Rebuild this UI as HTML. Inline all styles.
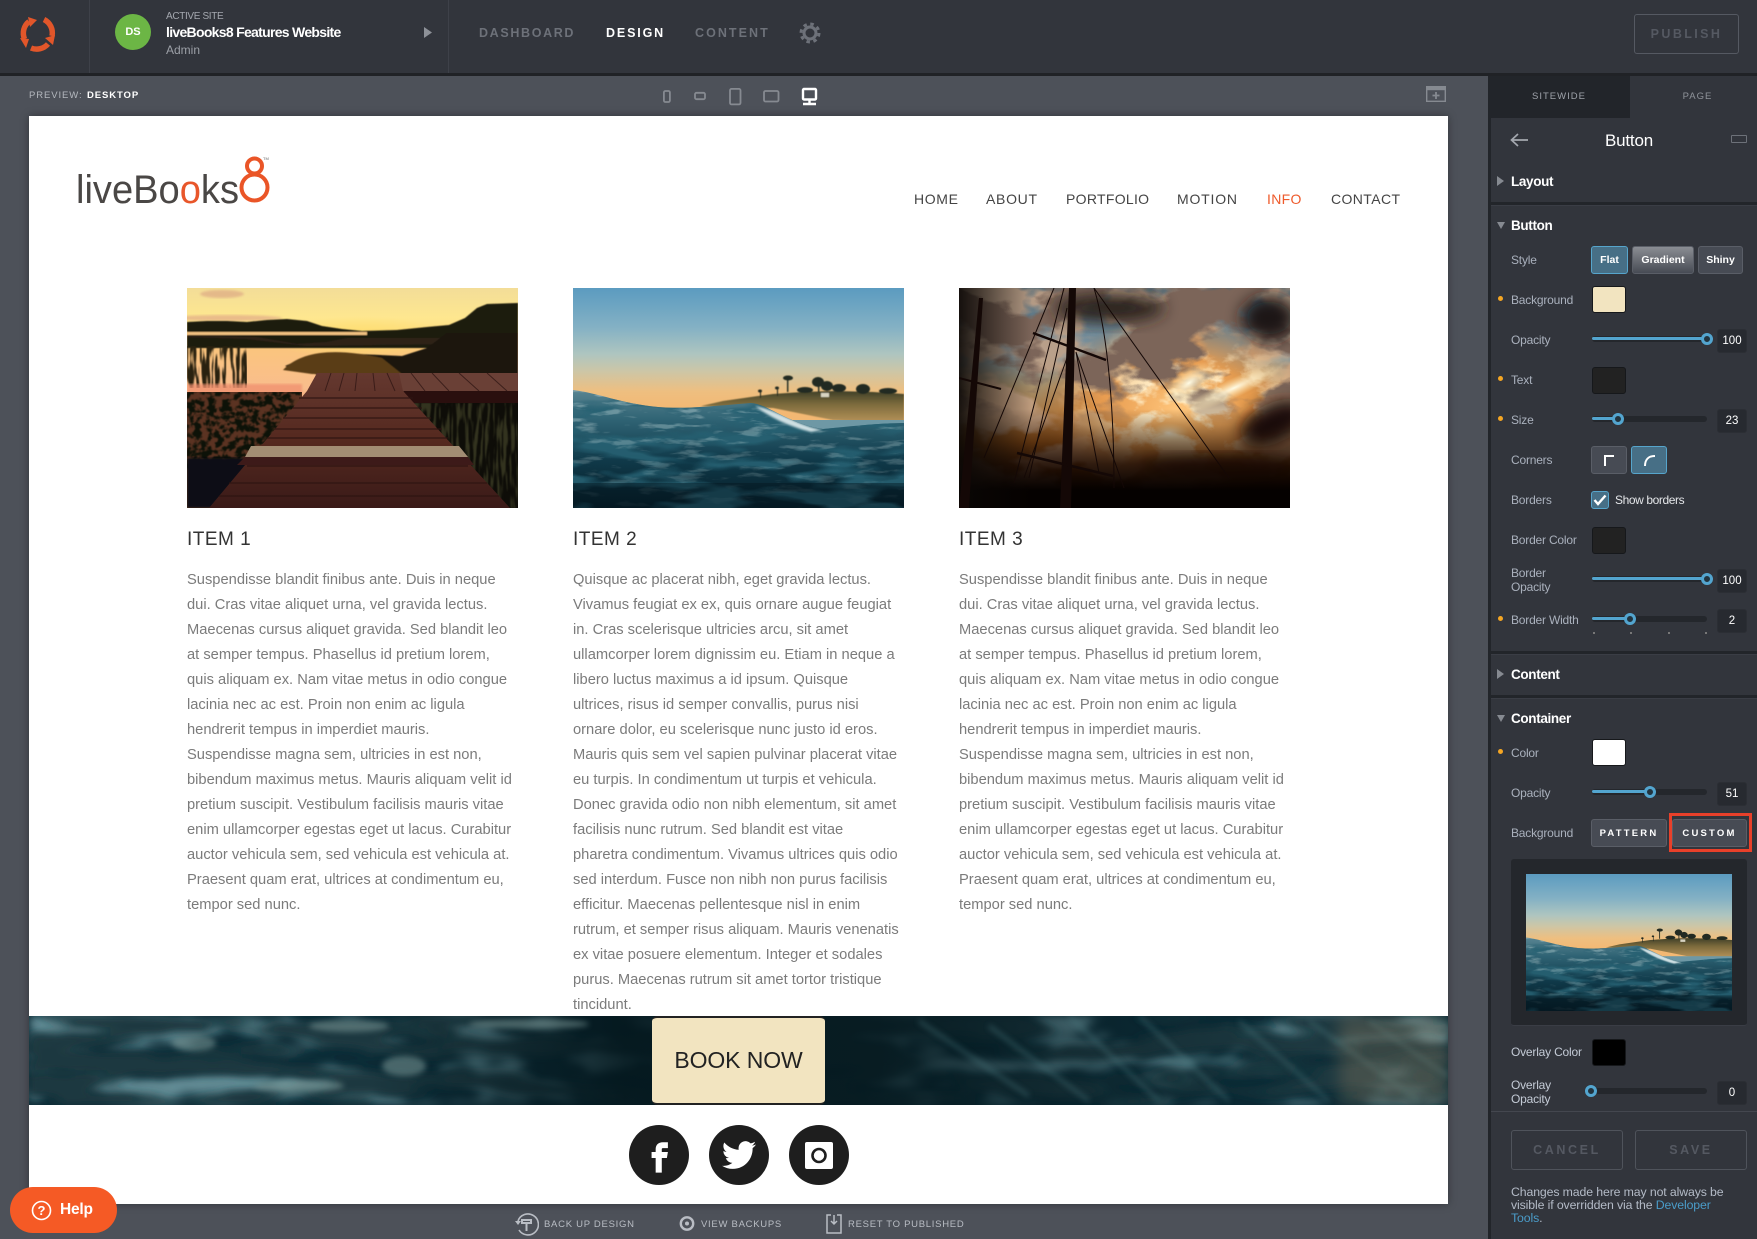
<!DOCTYPE html>
<html><head><meta charset="utf-8"><title>liveBooks8</title>
<style>
*{box-sizing:border-box}
html,body{margin:0;padding:0;width:1757px;height:1239px;overflow:hidden;background:#4d5159}
body{position:relative;font-family:"Liberation Sans",sans-serif}
.a,.l,.h,.dot,.sw,.btn,.tr,.fill,.th,.inp,.t,.body,.div{position:absolute}
.a{white-space:nowrap}
.l{left:1511px;font-size:12px;color:#aab1bd;line-height:14px;white-space:nowrap;letter-spacing:-.2px}
.h{left:1511px;font-size:13.5px;font-weight:bold;color:#fff;line-height:16px;letter-spacing:-.35px}
.dot{left:1498px;width:5px;height:5px;border-radius:50%;background:#f5a623}
.sw{left:1592px;width:34px;height:27px;border-radius:3px;border:1px solid #16181b}
.btn{border:1px solid #5a5e67;border-radius:3px;background:#474b54;color:#fff;font-weight:bold;font-size:10.5px;text-align:center;white-space:nowrap}
.on{background:#476f86;border-color:#56a5cc}
.tr{left:1592px;width:115px;height:6px;border-radius:3px;background:#24272c}
.fill{left:1592px;height:3px;background:#53a5cf;border-radius:2px}
.th{width:12px;height:12px;border-radius:50%;background:#22343f;border:3px solid #53a5cf}
.inp{left:1717px;width:30px;height:24px;background:#272a30;border:1px solid #2b2e34;border-radius:3px;color:#fff;font-size:11.5px;line-height:23px;text-align:center}
.body{font-size:14.7px;line-height:25px;color:#7b7b7b;white-space:nowrap;top:567.5px}
.t{font-size:19px;color:#333;top:528px;line-height:24px;letter-spacing:.5px;white-space:nowrap}
.nav{top:191px;font-size:14px;line-height:16px;color:#444}
.div{left:1491px;width:266px;background:#22252a;border-bottom:1px solid #3a3d45;height:4px}
.bb{top:1219px;font-size:9.5px;line-height:12px;letter-spacing:.72px;color:#b9bdc4}
</style></head><body>

<!-- SVG defs -->
<svg width="0" height="0" style="position:absolute">
<defs>
<linearGradient id="wsky" x1="0" y1="0" x2="0" y2="1"><stop offset="0" stop-color="#5b9bc0"/><stop offset=".18" stop-color="#84b1c4"/><stop offset=".3" stop-color="#aec5c0"/><stop offset=".38" stop-color="#cdc6a6"/><stop offset=".47" stop-color="#eebf80"/><stop offset=".55" stop-color="#f3b873"/></linearGradient>
<linearGradient id="wsea" x1="0" y1="0" x2="0" y2="1"><stop offset=".45" stop-color="#5d8895"/><stop offset=".6" stop-color="#2f6374"/><stop offset=".78" stop-color="#103a4a"/><stop offset="1" stop-color="#051b25"/></linearGradient>
<linearGradient id="wcl" x1="0" y1="0" x2="0" y2="1"><stop offset="0" stop-color="#3f3f28"/><stop offset=".4" stop-color="#7b6a3c"/><stop offset="1" stop-color="#b8945a"/></linearGradient>
<linearGradient id="wm" gradientUnits="userSpaceOnUse" x1="0" y1="100" x2="0" y2="220"><stop offset="0" stop-color="#fff"/><stop offset=".45" stop-color="#aaa"/><stop offset="1" stop-color="#222"/></linearGradient>
<mask id="wmk" maskUnits="userSpaceOnUse" x="0" y="0" width="331" height="220"><rect width="331" height="220" fill="url(#wm)"/></mask>
<filter id="wn1" x="0" y="0" width="100%" height="100%"><feTurbulence type="fractalNoise" baseFrequency=".03 .14" numOctaves="4" seed="7"/><feColorMatrix values="0 0 0 0 .6  0 0 0 0 .72  0 0 0 0 .72  6 0 0 0 -3.35"/></filter>
<filter id="wn2" x="0" y="0" width="100%" height="100%"><feTurbulence type="fractalNoise" baseFrequency=".012 .05" numOctaves="3" seed="21"/><feColorMatrix values="0 0 0 0 .02  0 0 0 0 .12  0 0 0 0 .17  6 0 0 0 -2.7"/></filter>
<filter id="bh5"><feGaussianBlur stdDeviation=".5"/></filter>
<filter id="bl1"><feGaussianBlur stdDeviation="1"/></filter>
<filter id="bl3" x="-30%" y="-30%" width="160%" height="160%"><feGaussianBlur stdDeviation="3"/></filter>
<filter id="bl8" x="-40%" y="-40%" width="180%" height="180%"><feGaussianBlur stdDeviation="8"/></filter>
<clipPath id="wclip"><path d="M0 102C25 105 50 116 85 119 110 121 130 119 178 115 195 116 215 136 250 141 280 138 310 135 331 135V220H0Z"/></clipPath>
<symbol id="wave" viewBox="0 0 331 220" preserveAspectRatio="none">
<rect width="331" height="220" fill="url(#wsky)"/>
<g filter="url(#bh5)">
<path d="M128 118L150 113 178 109 200 106 230 104 262 103 300 104 331 106V135L260 132 200 120Z" fill="url(#wcl)"/>
<g fill="#232b22"><rect x="214" y="90" width="1.4" height="14"/><rect x="245" y="92" width="1.4" height="12"/><rect x="187" y="103" width="1" height="7"/><rect x="204" y="100" width="1" height="8"/><ellipse cx="215" cy="90" rx="5" ry="2.5"/><ellipse cx="245" cy="94" rx="6" ry="5"/><ellipse cx="254" cy="98" rx="6" ry="5"/><ellipse cx="232" cy="102" rx="8" ry="3"/><ellipse cx="266" cy="100" rx="7" ry="4"/><ellipse cx="290" cy="101" rx="7" ry="5"/><ellipse cx="315" cy="103" rx="9" ry="3"/><ellipse cx="187" cy="103" rx="2" ry="1.5"/><ellipse cx="204" cy="100" rx="2" ry="1.5"/></g>
<rect x="248" y="105" width="8" height="4" fill="#d8d4c2"/>
</g>
<rect y="132" x="220" width="111" height="88" fill="#6e98a5"/>
<g clip-path="url(#wclip)">
<rect width="331" height="220" fill="url(#wsea)"/>
<rect width="331" height="220" filter="url(#wn2)" opacity=".9"/>
<g mask="url(#wmk)"><rect width="331" height="220" filter="url(#wn1)" opacity=".45"/></g>
<path d="M182 118C205 122 225 138 250 142L238 144C215 138 198 130 182 118Z" fill="#cfe0e3" filter="url(#bl1)"/>
<rect y="195" width="331" height="25" fill="#04161f" opacity=".45"/>
</g>
</symbol>
</defs></svg>

<!-- Top bar -->
<div class="a" style="left:0;top:0;width:1757px;height:73px;background:#32353c"></div>
<div class="a" style="left:0;top:73px;width:1757px;height:3px;background:#202226"></div>
<div class="a" style="left:89px;top:0;width:1px;height:73px;background:#3e4149"></div>
<div class="a" style="left:448px;top:0;width:1px;height:73px;background:#3e4149"></div>
<svg class="a" style="left:16px;top:12px" width="44" height="44" viewBox="0 0 44 44">
<g fill="none" stroke="#e2562a" stroke-width="5.5"><path d="M13 9.5A15 15 0 0 0 8.5 27"/><path d="M28 7.5A15 15 0 0 1 36 24"/><path d="M32 32A15 15 0 0 1 15 36"/></g>
<g fill="#e2562a"><path d="M12 5l9 3-7 7z"/><path d="M29 26l10-3-2 10z"/><path d="M4 26l9 1-3 9z"/></g></svg>
<div class="a" style="left:115px;top:14px;width:36px;height:36px;border-radius:50%;background:#6cb645;color:#fff;font-weight:bold;font-size:11px;line-height:36px;text-align:center">DS</div>
<div class="a" style="left:166px;top:11px;font-size:10px;line-height:12px;color:#a4a8af;letter-spacing:-.35px">ACTIVE SITE</div>
<div class="a" style="left:166px;top:24px;font-size:14px;line-height:17px;font-weight:bold;color:#fff;letter-spacing:-.7px">liveBooks8 Features Website</div>
<div class="a" style="left:166px;top:43px;font-size:12px;line-height:14px;color:#9ca0a7">Admin</div>
<svg class="a" style="left:423px;top:27px" width="10" height="11"><path d="M1 0L9 5.5 1 11Z" fill="#8d9198"/></svg>
<div class="a" style="left:479px;top:25px;font-size:12.5px;line-height:16px;font-weight:bold;letter-spacing:1.65px;color:#6d7179">DASHBOARD</div>
<div class="a" style="left:606px;top:25px;font-size:12.5px;line-height:16px;font-weight:bold;letter-spacing:1.85px;color:#fff">DESIGN</div>
<div class="a" style="left:695px;top:25px;font-size:12.5px;line-height:16px;font-weight:bold;letter-spacing:2.05px;color:#6d7179">CONTENT</div>
<svg class="a" style="left:799px;top:22px" width="22" height="22" viewBox="0 0 22 22"><circle cx="11" cy="11" r="6" fill="none" stroke="#6d7179" stroke-width="3"/><circle cx="11" cy="11" r="9" fill="none" stroke="#6d7179" stroke-width="3" stroke-dasharray="3.5 3.57"/></svg>
<div class="a" style="left:1634px;top:14px;width:105px;height:40px;border:1px solid #555962;border-radius:3px;font-size:12.5px;font-weight:bold;letter-spacing:2.4px;color:#555962;text-align:center;line-height:38px">PUBLISH</div>

<!-- Preview toolbar -->
<div class="a" style="left:29px;top:90px;font-size:9.5px;line-height:12px;letter-spacing:.9px;color:#b4b8be">PREVIEW:</div>
<div class="a" style="left:87px;top:90px;font-size:9.5px;line-height:12px;letter-spacing:.9px;font-weight:bold;color:#fff">DESKTOP</div>
<svg class="a" style="left:655px;top:84px" width="175" height="24" fill="none" stroke="#868a91" stroke-width="1.8">
<rect x="8.9" y="7" width="6" height="11" rx="1.5"/><rect x="40" y="8.8" width="10" height="6.4" rx="1.5"/><rect x="75" y="4.9" width="10.5" height="15.5" rx="1.5"/><rect x="109" y="7" width="14.5" height="10.5" rx="1.5"/>
<rect x="148" y="5" width="13" height="10.5" rx="1" stroke="#fff" stroke-width="2.4"/><path d="M154.5 16v3M148 20h13" stroke="#fff" stroke-width="2.4"/></svg>
<svg class="a" style="left:1426px;top:86px" width="20" height="16"><rect x=".7" y=".7" width="18.6" height="14.6" fill="none" stroke="#868a91" stroke-width="1.4"/><rect x="1" y="1" width="18" height="3.2" fill="#868a91"/><path d="M10 6v7M6.5 9.5h7" stroke="#868a91" stroke-width="1.8"/></svg>

<!-- Page -->
<div class="a" style="left:29px;top:116px;width:1419px;height:1088px;background:#fff;box-shadow:0 0 8px rgba(0,0,0,.35)"></div>
<svg class="a" style="left:70px;top:150px" width="210" height="60" viewBox="0 0 210 60">
<text x="6" y="53" font-family="Liberation Sans" font-size="40" fill="#4a4745" textLength="163" lengthAdjust="spacingAndGlyphs">liveBo<tspan fill="#e8562a">o</tspan>ks</text>
<g fill="none" stroke="#ea5527" stroke-width="4"><circle cx="184.5" cy="37.5" r="13"/><circle cx="184.5" cy="16" r="7.5"/></g>
<text x="193" y="10" font-family="Liberation Sans" font-size="4" fill="#666">TM</text></svg>

<div class="a nav" style="left:914px;letter-spacing:.65px">HOME</div>
<div class="a nav" style="left:986px;letter-spacing:.7px">ABOUT</div>
<div class="a nav" style="left:1066px;letter-spacing:.3px">PORTFOLIO</div>
<div class="a nav" style="left:1177px;letter-spacing:.8px">MOTION</div>
<div class="a nav" style="left:1267px;color:#ee5a2b;letter-spacing:.3px">INFO</div>
<div class="a nav" style="left:1331px;letter-spacing:.4px">CONTACT</div>

<!-- Image 1 -->
<svg class="a" style="left:187px;top:288px" width="331" height="220" viewBox="0 0 331 220">
<defs><linearGradient id="s1" x1="0" y1="0" x2="0" y2="1"><stop offset="0" stop-color="#f3dd98"/><stop offset=".6" stop-color="#fee78f"/><stop offset="1" stop-color="#ffd87e"/></linearGradient>
<linearGradient id="w1" x1="0" y1="0" x2="0" y2="1"><stop offset="0" stop-color="#fbc878"/><stop offset=".5" stop-color="#f9bd8c"/><stop offset="1" stop-color="#e48a6c"/></linearGradient>
<linearGradient id="d1" x1="0" y1="0" x2="0" y2="1"><stop offset="0" stop-color="#64382f"/><stop offset=".5" stop-color="#55291f"/><stop offset="1" stop-color="#3a1a18"/></linearGradient>
<radialGradient id="sun1"><stop offset="0" stop-color="#ffdf6c"/><stop offset="1" stop-color="#ffdf6c" stop-opacity="0"/></radialGradient>
<filter id="g1" x="0" y="0" width="100%" height="100%" color-interpolation-filters="sRGB"><feTurbulence type="fractalNoise" baseFrequency=".14 .16" numOctaves="3" seed="4"/><feColorMatrix values="0 0 0 0 .05  0 0 0 0 .07  0 0 0 0 .03  7 0 0 0 -3"/><feGaussianBlur stdDeviation=".5"/></filter>
<filter id="gr1" x="0" y="0" width="100%" height="100%" color-interpolation-filters="sRGB"><feTurbulence type="fractalNoise" baseFrequency=".3 .03" numOctaves="2" seed="9"/><feColorMatrix values="0 0 0 0 .16  0 0 0 0 .13  0 0 0 0 .06  9 0 0 0 -4.1"/><feGaussianBlur stdDeviation=".5"/></filter>
<filter id="gr2" x="0" y="0" width="100%" height="100%" color-interpolation-filters="sRGB"><feTurbulence type="fractalNoise" baseFrequency=".3 .03" numOctaves="2" seed="19"/><feColorMatrix values="0 0 0 0 .2  0 0 0 0 .2  0 0 0 0 .12  9 0 0 0 -4.4"/><feGaussianBlur stdDeviation=".5"/></filter></defs>
<rect width="331" height="50" fill="url(#s1)"/>
<rect y="45" width="331" height="110" fill="url(#w1)"/>
<ellipse cx="175" cy="50" rx="90" ry="22" fill="url(#sun1)"/>
<ellipse cx="35" cy="6" rx="22" ry="4" fill="#d79b80" opacity=".55" filter="url(#bl1)"/>
<ellipse cx="40" cy="30" rx="55" ry="3" fill="#d99a85" opacity=".55" filter="url(#bl1)"/>
<g filter="url(#bh5)">
<path d="M0 34L20 33 40 33 60 34 80 32 100 31 120 33 135 38 155 41 175 43 210 42 240 39 262 37 278 30 290 20 300 16 331 15V60H0Z" fill="#1f1a10"/>
<path d="M0 44H180V47H0Z" fill="#f0c080"/>
<path d="M0 47L70 49 110 56 140 54 160 50 270 50 260 56 120 58 60 51 0 49Z" fill="#2d2218"/>
<path d="M260 45H331V92H150L120 84 98 78 112 72 170 66 215 68 240 60Z" fill="#1a170c"/>
<path d="M96 82C115 62 150 60 195 70L215 86H125Z" fill="#5a3e18"/>
</g>
<rect x="0" y="58" width="60" height="42" filter="url(#gr1)"/>
<rect x="0" y="96" width="115" height="10" fill="#f08f6e" opacity=".75" filter="url(#bl1)"/>
<rect y="104" width="115" height="116" fill="#5b3322"/>
<rect x="0" y="104" width="115" height="78" filter="url(#g1)"/>
<path d="M0 170H110L72 220H0Z" fill="#0b1014" filter="url(#bl1)"/>
<path d="M220 100H331V220H240Z" fill="#0e0d08"/>
<rect x="225" y="115" width="106" height="105" filter="url(#gr2)"/>
<path d="M130 85H331V103H220L125 103Z" fill="#6a4036"/>
<path d="M216 103H331V115H225Z" fill="#2a0f0e"/>
<path d="M130 85L120 103 22 220H323L216 103 212 85Z" fill="url(#d1)"/>
<g stroke="#2d1412" stroke-width="1" opacity=".75"><path d="M144 85L138 103M157 85L152 103M170 85L168 103M186 85L188 103M200 85L208 103M224 85L238 103M245 85L262 103M272 85L292 103M300 85L320 103"/></g>
<g stroke="#2e1412" stroke-width="1.2" opacity=".9"><path d="M112 110H226M105 120H235M96 130H244M88 141H255M80 150H261M60 178H281M42 195H300M32 208H312"/></g>
<path d="M64 158H272L281 169H58Z" fill="#a28d73"/>
<path d="M58 169H281L287 177H50Z" fill="#3d1a19"/>
</svg>

<!-- Image 2 -->
<svg class="a" style="left:573px;top:288px" width="331" height="220"><use href="#wave" width="331" height="220"/></svg>

<!-- Image 3 -->
<svg class="a" style="left:959px;top:288px" width="331" height="220" viewBox="0 0 331 220">
<defs>
<filter id="c1" x="0" y="0" width="100%" height="100%"><feTurbulence type="fractalNoise" baseFrequency=".012 .022" numOctaves="5" seed="12"/><feColorMatrix values="0 0 0 0 .2  0 0 0 0 .13  0 0 0 0 .1  10 0 0 0 -4.7"/></filter>
<filter id="c2" x="0" y="0" width="100%" height="100%"><feTurbulence type="fractalNoise" baseFrequency=".02 .03" numOctaves="5" seed="31"/><feColorMatrix values="0 0 0 0 1  0 0 0 0 .84  0 0 0 0 .56  9 0 0 0 -4.2"/></filter>
<filter id="c8" x="0" y="0" width="100%" height="100%"><feTurbulence type="fractalNoise" baseFrequency=".016 .028" numOctaves="4" seed="44"/><feColorMatrix values="0 0 0 0 .55  0 0 0 0 .36  0 0 0 0 .24  7 0 0 0 -3"/></filter>
<linearGradient id="c3" x1="0" y1="0" x2="0" y2="1"><stop offset="0" stop-color="#4d6674"/><stop offset=".3" stop-color="#7e98a6"/><stop offset=".45" stop-color="#a58d68"/><stop offset=".7" stop-color="#a5601f"/><stop offset="1" stop-color="#3c1e08"/></linearGradient>
<radialGradient id="c4" cx=".66" cy=".55" r=".42"><stop offset="0" stop-color="#ffc67c"/><stop offset=".55" stop-color="#ef9c48" stop-opacity=".85"/><stop offset="1" stop-color="#c8742a" stop-opacity="0"/></radialGradient>
<linearGradient id="c5" x1="0" y1="0" x2="0" y2="1"><stop offset=".55" stop-color="#0f0500" stop-opacity="0"/><stop offset=".8" stop-color="#160700" stop-opacity=".85"/><stop offset=".92" stop-color="#050100"/></linearGradient>
<linearGradient id="c6" x1="0" y1="0" x2="1" y2="0"><stop offset="0" stop-color="#0a0705" stop-opacity=".9"/><stop offset=".22" stop-color="#0a0705" stop-opacity="0"/></linearGradient>
<radialGradient id="c7"><stop offset="0" stop-color="#fffbe5"/><stop offset="1" stop-color="#ffe6a8" stop-opacity="0"/></radialGradient>
<radialGradient id="m1" cx=".68" cy=".52" r=".4"><stop offset=".3" stop-color="#fff"/><stop offset="1" stop-color="#000"/></radialGradient>
<linearGradient id="m2" x1="0" y1="0" x2="0" y2="1"><stop offset="0" stop-color="#fff"/><stop offset=".45" stop-color="#fff"/><stop offset=".62" stop-color="#000"/></linearGradient>
<mask id="mk1" maskUnits="userSpaceOnUse" x="0" y="0" width="331" height="220"><rect width="331" height="220" fill="url(#m1)"/></mask>
<mask id="mk2" maskUnits="userSpaceOnUse" x="0" y="0" width="331" height="220"><rect width="331" height="220" fill="url(#m2)"/></mask>
</defs>
<rect width="331" height="220" fill="url(#c3)"/>
<rect width="331" height="220" filter="url(#c8)" opacity=".85"/>
<rect width="331" height="220" fill="url(#c4)"/>
<g mask="url(#mk1)"><rect width="331" height="220" filter="url(#c2)"/></g>
<g mask="url(#mk2)"><rect width="331" height="220" filter="url(#c1)"/></g>
<ellipse cx="230" cy="95" rx="32" ry="14" fill="url(#c7)" transform="rotate(-35 230 95)"/>
<ellipse cx="275" cy="100" rx="55" ry="10" fill="url(#c7)" transform="rotate(-25 275 100)"/>
<ellipse cx="210" cy="145" rx="20" ry="10" fill="url(#c7)" opacity=".85"/>
<ellipse cx="310" cy="30" rx="28" ry="22" fill="#1d1512" filter="url(#bl8)"/>
<ellipse cx="150" cy="20" rx="55" ry="14" fill="#2c221d" filter="url(#bl8)"/>
<ellipse cx="315" cy="135" rx="36" ry="20" fill="#1c110a" filter="url(#bl8)" transform="rotate(-25 315 135)"/>
<ellipse cx="260" cy="180" rx="80" ry="10" fill="#2a1407" filter="url(#bl8)"/>
<rect width="331" height="220" fill="url(#c5)"/>
<rect width="331" height="220" fill="url(#c6)"/>
<g fill="#140806"><path d="M110 0H117L112 220H101Z"/><path d="M20 10H24L10 220H0Z"/></g>
<g stroke="#140806" fill="none"><path d="M74 45L147 72" stroke-width="2.5"/><path d="M58 165L154 188" stroke-width="2.5"/><path d="M0 90L42 101" stroke-width="2"/><path d="M95 0L25 170" stroke-width="1"/><path d="M105 0L55 195M108 20L70 190" stroke-width="1"/><path d="M135 0C150 50 155 130 155 200" stroke-width="1"/><path d="M117 64L165 200M117 64L140 185" stroke-width="1"/><path d="M135 0L270 190" stroke-width="1"/><path d="M108 70L65 190" stroke-width="1"/></g>
</svg>

<div class="t" style="left:187px">ITEM 1</div>
<div class="t" style="left:573px">ITEM 2</div>
<div class="t" style="left:959px">ITEM 3</div>

<div class="body" style="left:187px">Suspendisse blandit finibus ante. Duis in neque<br>dui. Cras vitae aliquet urna, vel gravida lectus.<br>Maecenas cursus aliquet gravida. Sed blandit leo<br>at semper tempus. Phasellus id pretium lorem,<br>quis aliquam ex. Nam vitae metus in odio congue<br>lacinia nec ac est. Proin non enim ac ligula<br>hendrerit tempus in imperdiet mauris.<br>Suspendisse magna sem, ultricies in est non,<br>bibendum maximus metus. Mauris aliquam velit id<br>pretium suscipit. Vestibulum facilisis mauris vitae<br>enim ullamcorper egestas eget ut lacus. Curabitur<br>auctor vehicula sem, sed vehicula est vehicula at.<br>Praesent quam erat, ultrices at condimentum eu,<br>tempor sed nunc.</div>
<div class="body" style="left:573px">Quisque ac placerat nibh, eget gravida lectus.<br>Vivamus feugiat ex ex, quis ornare augue feugiat<br>in. Cras scelerisque ultricies arcu, sit amet<br>ullamcorper lorem dignissim eu. Etiam in neque a<br>libero luctus maximus a id ipsum. Quisque<br>ultrices, risus id semper convallis, purus nisi<br>ornare dolor, eu scelerisque nunc justo id eros.<br>Mauris quis sem vel sapien pulvinar placerat vitae<br>eu turpis. In condimentum ut turpis et vehicula.<br>Donec gravida odio non nibh elementum, sit amet<br>facilisis nunc rutrum. Sed blandit est vitae<br>pharetra condimentum. Vivamus ultrices quis odio<br>sed interdum. Fusce non nibh non purus facilisis<br>efficitur. Maecenas pellentesque nisl in enim<br>rutrum, et semper risus aliquam. Mauris venenatis<br>ex vitae posuere elementum. Integer et sodales<br>purus. Maecenas rutrum sit amet tortor tristique<br>tincidunt.</div>
<div class="body" style="left:959px">Suspendisse blandit finibus ante. Duis in neque<br>dui. Cras vitae aliquet urna, vel gravida lectus.<br>Maecenas cursus aliquet gravida. Sed blandit leo<br>at semper tempus. Phasellus id pretium lorem,<br>quis aliquam ex. Nam vitae metus in odio congue<br>lacinia nec ac est. Proin non enim ac ligula<br>hendrerit tempus in imperdiet mauris.<br>Suspendisse magna sem, ultricies in est non,<br>bibendum maximus metus. Mauris aliquam velit id<br>pretium suscipit. Vestibulum facilisis mauris vitae<br>enim ullamcorper egestas eget ut lacus. Curabitur<br>auctor vehicula sem, sed vehicula est vehicula at.<br>Praesent quam erat, ultrices at condimentum eu,<br>tempor sed nunc.</div>

<!-- Band -->
<svg class="a" style="left:29px;top:1016px" width="1419" height="89" viewBox="0 0 1419 89">
<defs>
<filter id="b1" x="0" y="0" width="100%" height="100%"><feTurbulence type="fractalNoise" baseFrequency=".012 .035" numOctaves="3" seed="5"/><feColorMatrix values="0 0 0 0 .12  0 0 0 0 .26  0 0 0 0 .3  6 0 0 0 -2.9"/><feGaussianBlur stdDeviation="4"/></filter>
<filter id="b2" x="0" y="0" width="100%" height="100%"><feTurbulence type="fractalNoise" baseFrequency=".008 .05" numOctaves="3" seed="15"/><feColorMatrix values="0 0 0 0 .01  0 0 0 0 .04  0 0 0 0 .05  7 0 0 0 -2.9"/><feGaussianBlur stdDeviation="4"/></filter>
<linearGradient id="b3" x1="0" y1="0" x2="1" y2="0"><stop offset=".24" stop-color="#04171d" stop-opacity="0"/><stop offset=".42" stop-color="#04171d" stop-opacity=".9"/><stop offset=".6" stop-color="#04171d" stop-opacity=".85"/><stop offset=".78" stop-color="#04171d" stop-opacity=".25"/><stop offset=".9" stop-color="#04171d" stop-opacity="0"/></linearGradient>
</defs>
<rect width="1419" height="89" fill="#0c2b36"/>
<rect width="1419" height="89" filter="url(#b1)"/>
<rect width="1419" height="89" filter="url(#b2)"/>
<rect width="1419" height="89" fill="url(#b3)"/>
<g fill="#7d9a98" opacity=".55" filter="url(#bl3)"><ellipse cx="165" cy="27" rx="22" ry="8"/><ellipse cx="375" cy="50" rx="22" ry="10"/><ellipse cx="270" cy="70" rx="45" ry="6"/><ellipse cx="320" cy="10" rx="40" ry="6"/><ellipse cx="500" cy="8" rx="60" ry="5"/></g>
<g stroke="#477379" stroke-width="3.5" fill="none" opacity=".5" filter="url(#bl3)"><path d="M890 5L1000 80M960 10L1060 85M1040 0L1130 85M1110 0L1200 85M1210 5L1300 85M1280 5L1390 85M1340 5L1419 60"/></g>
<rect x="1310" width="109" height="89" fill="#8a7a60" opacity=".35" filter="url(#bl8)"/>
</svg>
<div class="a" style="left:652px;top:1016px;width:173px;height:89px;background:#f2e4c0;border:2px solid #222;border-width:2px 0;border-radius:5px;font-size:23px;line-height:85px;text-align:center;color:#222;letter-spacing:-.1px">BOOK NOW</div>

<!-- Social -->
<svg class="a" style="left:625px;top:1122px" width="230" height="66" viewBox="0 0 230 66">
<g fill="#1e1e1e"><circle cx="34" cy="33" r="30"/><circle cx="114" cy="33" r="30"/><circle cx="194" cy="33" r="30"/></g>
<path d="M15 18h5v-6h-5c-4.4 0-7 2.8-7 7v3H4v6h4v15h6V28h5l1-6h-6v-3c0-.6.4-1 1-1z" transform="translate(22.5 8.5) scale(1.02 .98)" fill="#fff"/>
<path transform="translate(97 16) scale(1.42)" fill="#fff" d="M23.953 4.57a10 10 0 01-2.825.775 4.958 4.958 0 002.163-2.723c-.951.555-2.005.959-3.127 1.184a4.92 4.92 0 00-8.384 4.482C7.69 8.095 4.067 6.13 1.64 3.162a4.822 4.822 0 00-.666 2.475c0 1.71.87 3.213 2.188 4.096a4.904 4.904 0 01-2.228-.616v.06a4.923 4.923 0 003.946 4.827 4.996 4.996 0 01-2.212.085 4.936 4.936 0 004.604 3.417 9.867 9.867 0 01-6.102 2.105c-.39 0-.779-.023-1.17-.067a13.995 13.995 0 007.557 2.209c9.053 0 13.998-7.496 13.998-13.985 0-.21 0-.42-.015-.63A9.935 9.935 0 0024 4.59z"/>
<rect x="180" y="20" width="28" height="27" rx="2" fill="#fff"/><circle cx="194" cy="33.5" r="6.5" fill="none" stroke="#1e1e1e" stroke-width="2.6"/>
</svg>

<!-- Help -->
<div class="a" style="left:10px;top:1187px;width:107px;height:46px;border-radius:23px;background:#f55a25"></div>
<svg class="a" style="left:31px;top:1200px" width="21" height="21"><circle cx="10.5" cy="10.5" r="9" fill="none" stroke="#fff" stroke-width="1.6"/><text x="10.5" y="15" font-family="Liberation Sans" font-size="13" font-weight="bold" fill="#fff" text-anchor="middle">?</text></svg>
<div class="a" style="left:60px;top:1201px;font-size:15.5px;line-height:18px;font-weight:bold;color:#fff;letter-spacing:-.2px">Help</div>

<!-- Bottom bar -->
<svg class="a" style="left:514px;top:1212px" width="25" height="25" fill="none" stroke="#b9bdc4" stroke-width="1.6"><path d="M4 9A10.5 10.5 0 1 1 5 18"/><path d="M1 9h6l-3 4z" fill="#b9bdc4" stroke="none"/><path d="M8 8h9v3H8zM12.5 11v8" stroke-width="2"/></svg>
<div class="a bb" style="left:544px">BACK UP DESIGN</div>
<svg class="a" style="left:679px;top:1216px" width="16" height="15"><circle cx="8" cy="7.5" r="6.2" fill="none" stroke="#b9bdc4" stroke-width="2.4"/><circle cx="8" cy="7.5" r="2" fill="#b9bdc4"/></svg>
<div class="a bb" style="left:701px">VIEW BACKUPS</div>
<svg class="a" style="left:826px;top:1214px" width="16" height="20" fill="none" stroke="#b9bdc4" stroke-width="1.5"><path d="M5 1H1v18h14V1h-4"/><path d="M8 1v9M5 7l3 3 3-3"/></svg>
<div class="a bb" style="left:848px">RESET TO PUBLISHED</div>

<!-- Sidebar -->
<div class="a" style="left:1488px;top:76px;width:269px;height:1163px;background:#32353c;border-left:3px solid #22252a"></div>
<div class="a" style="left:1488px;top:76px;width:142px;height:42px;background:#22252a;color:#9fa3aa;font-size:9.5px;letter-spacing:1px;line-height:42px;text-align:center">SITEWIDE</div>
<div class="a" style="left:1630px;top:76px;width:127px;height:42px;background:#32353c;color:#8f939a;font-size:9.5px;letter-spacing:1px;line-height:42px;text-align:center;padding-left:8px">PAGE</div>
<svg class="a" style="left:1510px;top:132px" width="19" height="16" fill="none" stroke="#a4a8af" stroke-width="1.7"><path d="M1.5 8H18M8 2L1.5 8 8 14"/></svg>
<div class="a" style="left:1529px;top:131px;width:200px;text-align:center;font-size:17px;line-height:20px;color:#fff;letter-spacing:-.2px">Button</div>
<div class="a" style="left:1731px;top:135px;width:16px;height:8px;border:1px solid #6d7179;border-radius:1px"></div>

<svg class="a" style="left:1497px;top:176px" width="8" height="10"><path d="M0 0L7 5 0 10Z" fill="#868a91"/></svg>
<div class="h" style="top:174px">Layout</div>
<div class="div" style="top:202px"></div>
<svg class="a" style="left:1497px;top:222px" width="9" height="7"><path d="M0 0H8L4 7Z" fill="#868a91"/></svg>
<div class="h" style="top:218px">Button</div>

<div class="l" style="top:253px">Style</div>
<div class="btn on" style="left:1591px;top:246px;width:37px;height:28px;line-height:26px">Flat</div>
<div class="btn" style="left:1632px;top:246px;width:62px;height:28px;line-height:26px;background:linear-gradient(#8a8d93,#474b54)">Gradient</div>
<div class="btn" style="left:1698px;top:246px;width:45px;height:28px;line-height:26px">Shiny</div>

<div class="dot" style="top:296px"></div><div class="l" style="top:293px">Background</div>
<div class="sw" style="top:286px;background:#f2e4c0"></div>

<div class="l" style="top:333px">Opacity</div>
<div class="tr" style="top:336px"></div><div class="fill" style="top:337px;width:115px"></div><div class="th" style="left:1701px;top:333px"></div><div class="inp" style="top:329px">100</div>

<div class="dot" style="top:376px"></div><div class="l" style="top:373px">Text</div>
<div class="sw" style="top:367px;background:#222"></div>

<div class="dot" style="top:416px"></div><div class="l" style="top:413px">Size</div>
<div class="tr" style="top:416px"></div><div class="fill" style="top:417px;width:26px"></div><div class="th" style="left:1612px;top:413px"></div><div class="inp" style="top:409px">23</div>

<div class="l" style="top:453px">Corners</div>
<div class="btn" style="left:1591px;top:446px;width:36px;height:28px"></div>
<svg class="a" style="left:1603px;top:454px" width="12" height="12" fill="none" stroke="#fff" stroke-width="2"><path d="M2 12V2H11"/></svg>
<div class="btn on" style="left:1631px;top:446px;width:36px;height:28px"></div>
<svg class="a" style="left:1643px;top:454px" width="12" height="12" fill="none" stroke="#fff" stroke-width="2"><path d="M2 12C2 6 5 2 12 2"/></svg>

<div class="l" style="top:493px">Borders</div>
<div class="btn on" style="left:1591px;top:491px;width:18px;height:18px"></div>
<svg class="a" style="left:1593px;top:494px" width="14" height="12" fill="none" stroke="#fff" stroke-width="2.4"><path d="M1.5 6L5 10 12.5 1.5"/></svg>
<div class="a" style="left:1615px;top:493px;font-size:12px;line-height:14px;color:#e4e6e9;letter-spacing:-.4px">Show borders</div>

<div class="l" style="top:533px">Border Color</div>
<div class="sw" style="top:527px;background:#222"></div>

<div class="l" style="top:566px">Border</div><div class="l" style="top:580px">Opacity</div>
<div class="tr" style="top:576px"></div><div class="fill" style="top:577px;width:115px"></div><div class="th" style="left:1701px;top:573px"></div><div class="inp" style="top:569px">100</div>

<div class="dot" style="top:616px"></div><div class="l" style="top:613px">Border Width</div>
<div class="tr" style="top:616px"></div><div class="fill" style="top:617px;width:38px"></div><div class="th" style="left:1624px;top:613px"></div><div class="inp" style="top:609px">2</div>
<svg class="a" style="left:1591px;top:632px" width="120" height="3" fill="#777"><rect x="2" width="2" height="2"/><rect x="39" width="2" height="2"/><rect x="77" width="2" height="2"/><rect x="114" width="2" height="2"/></svg>

<div class="div" style="top:651px"></div>
<svg class="a" style="left:1497px;top:669px" width="8" height="10"><path d="M0 0L7 5 0 10Z" fill="#868a91"/></svg>
<div class="h" style="top:667px">Content</div>
<div class="div" style="top:695px"></div>
<svg class="a" style="left:1497px;top:715px" width="9" height="7"><path d="M0 0H8L4 7Z" fill="#868a91"/></svg>
<div class="h" style="top:711px">Container</div>

<div class="dot" style="top:749px"></div><div class="l" style="top:746px">Color</div>
<div class="sw" style="top:739px;background:#fff"></div>

<div class="l" style="top:786px">Opacity</div>
<div class="tr" style="top:789px"></div><div class="fill" style="top:790px;width:58px"></div><div class="th" style="left:1644px;top:786px"></div><div class="inp" style="top:782px">51</div>

<div class="l" style="top:826px">Background</div>
<div class="btn" style="left:1591px;top:819px;width:76px;height:28px;line-height:27px;font-size:9.5px;letter-spacing:2.2px">PATTERN</div>
<div class="btn" style="left:1672px;top:819px;width:75px;height:28px;line-height:27px;font-size:9.5px;letter-spacing:2.2px">CUSTOM</div>
<div class="a" style="left:1669px;top:813px;width:83px;height:39px;border:3px solid #e8402a"></div>

<div class="a" style="left:1511px;top:859px;width:236px;height:167px;background:#24272c;border-radius:3px;border-bottom:1px solid #3a3d45"></div>
<svg class="a" style="left:1526px;top:874px" width="206" height="137"><use href="#wave" width="206" height="137"/></svg>

<div class="l" style="top:1045px;color:#c4cbd6">Overlay Color</div>
<div class="sw" style="top:1039px;background:#000"></div>
<div class="l" style="top:1078px;color:#c4cbd6">Overlay</div><div class="l" style="top:1092px;color:#c4cbd6">Opacity</div>
<div class="tr" style="top:1088px"></div><div class="th" style="left:1585px;top:1085px"></div><div class="inp" style="top:1081px">0</div>
<div class="a" style="left:1491px;top:1111px;width:266px;height:1px;background:#44474f"></div>

<div class="a" style="left:1511px;top:1130px;width:112px;height:40px;border:1px solid #4f535b;border-radius:3px;text-align:center;line-height:38px;font-size:12.5px;font-weight:bold;letter-spacing:2.6px;color:#555962">CANCEL</div>
<div class="a" style="left:1635px;top:1130px;width:112px;height:40px;border:1px solid #4f535b;border-radius:3px;text-align:center;line-height:38px;font-size:12.5px;font-weight:bold;letter-spacing:2.6px;color:#555962">SAVE</div>
<div class="a" style="left:1511px;top:1186px;font-size:12.3px;line-height:13px;color:#b4bbc7;letter-spacing:-.12px">Changes made here may not always be<br>visible if overridden via the <span style="color:#4a9cc9">Developer</span><br><span style="color:#4a9cc9">Tools</span>.</div>
</body></html>
